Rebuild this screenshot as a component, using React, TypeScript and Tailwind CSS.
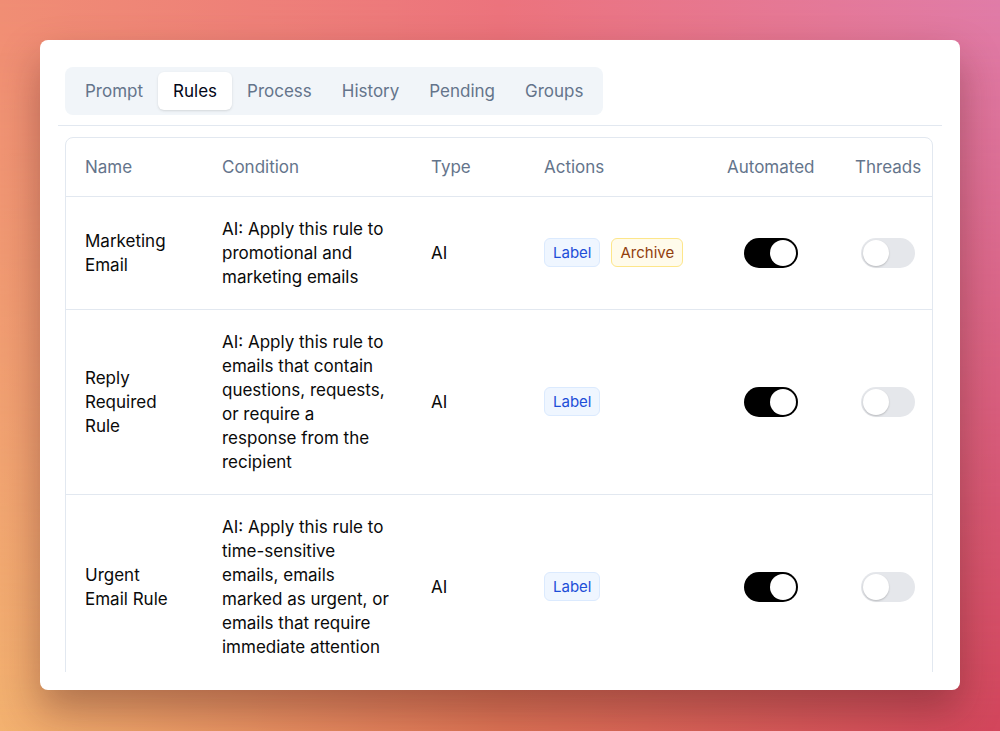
import React from 'react';

type Badge = { text: string; tone: 'blue' | 'amber' };

interface Rule {
  name: string;
  condition: string;
  type: string;
  actions: Badge[];
  automated: boolean;
  threads: boolean;
}

const rules: Rule[] = [
  {
    name: 'Marketing Email',
    condition: 'AI: Apply this rule to promotional and marketing emails',
    type: 'AI',
    actions: [
      { text: 'Label', tone: 'blue' },
      { text: 'Archive', tone: 'amber' },
    ],
    automated: true,
    threads: false,
  },
  {
    name: 'Reply Required Rule',
    condition:
      'AI: Apply this rule to emails that contain questions, requests, or require a response from the recipient',
    type: 'AI',
    actions: [{ text: 'Label', tone: 'blue' }],
    automated: true,
    threads: false,
  },
  {
    name: 'Urgent Email Rule',
    condition:
      'AI: Apply this rule to time-sensitive emails, emails marked as urgent, or emails that require immediate attention',
    type: 'AI',
    actions: [{ text: 'Label', tone: 'blue' }],
    automated: true,
    threads: false,
  },
];

const tabs = ['Prompt', 'Rules', 'Process', 'History', 'Pending', 'Groups'];

const Toggle: React.FC<{ on: boolean }> = ({ on }) =>
  on ? (
    <div className="w-[54px] h-[30px] rounded-full bg-black flex items-center justify-end px-[2px]">
      <div className="w-[26px] h-[26px] rounded-full bg-white" />
    </div>
  ) : (
    <div className="w-[54px] h-[30px] rounded-full bg-[#e5e7eb] flex items-center justify-start px-[2px]">
      <div className="w-[26px] h-[26px] rounded-full bg-white shadow-[0_1px_2px_rgba(0,0,0,0.2)]" />
    </div>
  );

const ActionBadge: React.FC<{ badge: Badge }> = ({ badge }) => (
  <span
    className={
      badge.tone === 'blue'
        ? 'inline-flex items-center h-[29px] px-[8px] rounded-md border border-[#dbeafe] bg-[#eff6ff] text-[#1d4ed8] text-[15px]'
        : 'inline-flex items-center h-[29px] px-[8px] rounded-md border border-[#fde68a] bg-[#fffbeb] text-[#92400e] text-[15px]'
    }
  >
    {badge.text}
  </span>
);

export default function App() {
  return (
    <div className="grid w-full h-[731px] overflow-hidden font-['Inter',sans-serif]">
      <div className="[grid-area:1/1] bg-[linear-gradient(to_right,#f3b270,#dd7355_50%,#d3465c)]" />
      <div className="[grid-area:1/1] bg-[linear-gradient(to_right,#f08d74,#ec737d_50%,#e07ca8)] [mask-image:linear-gradient(to_bottom,black,transparent)]" />
      <div className="[grid-area:1/1] relative z-10 p-10">
        <div className="h-[650px] bg-white rounded-lg shadow-[0_20px_40px_rgba(60,20,20,0.35)] p-[18px] flex flex-col">
          <div className="border-b border-[#e2e8f0] pt-[9px] pb-[10px] px-[7px]">
            <div className="inline-flex bg-[#f1f5f9] rounded-lg p-[5px]">
              {tabs.map((t) =>
                t === 'Rules' ? (
                  <div key={t} className="h-[38px] px-[15px] pt-[1px] flex items-center bg-white rounded-md text-[17px] text-[#020617] shadow-sm">
                    {t}
                  </div>
                ) : (
                  <div key={t} className="h-[38px] px-[15px] pt-[1px] flex items-center text-[17px] text-[#64748b]">
                    {t}
                  </div>
                )
              )}
            </div>
          </div>
          <div className="flex-1 min-h-0 overflow-hidden pt-[11px] pl-[7px] pr-[9px]">
            <div className="border border-[#e2e8f0] rounded-lg">
              <table className="w-full table-fixed border-collapse text-[17px] leading-6">
                <colgroup>
                  <col className="w-[137px]" />
                  <col className="w-[209px]" />
                  <col className="w-[113px]" />
                  <col className="w-[183px]" />
                  <col className="w-[128px]" />
                  <col />
                </colgroup>
                <thead>
                  <tr className="h-[58px] text-[#64748b] text-left">
                    <th className="font-normal pl-[19px]">Name</th>
                    <th className="font-normal pl-[19px]">Condition</th>
                    <th className="font-normal pl-[19px]">Type</th>
                    <th className="font-normal pl-[19px]">Actions</th>
                    <th className="font-normal pl-[19px]">Automated</th>
                    <th className="font-normal pl-[19px]">Threads</th>
                  </tr>
                </thead>
                <tbody className="text-[#0a0a0a]">
                  {rules.map((r) => (
                    <tr key={r.name} className="border-t border-[#e2e8f0]">
                      <td className="pl-[19px] pr-5 py-5">{r.name}</td>
                      <td className="pl-[19px] pr-5 py-5">{r.condition}</td>
                      <td className="pl-[19px] pr-5 py-5">{r.type}</td>
                      <td className="pl-[19px] py-5">
                        <div className="flex gap-[11px]">
                          {r.actions.map((a) => (
                            <ActionBadge key={a.text} badge={a} />
                          ))}
                        </div>
                      </td>
                      <td className="pl-[19px] py-5">
                        <div className="w-[88px] flex justify-center">
                          <Toggle on={r.automated} />
                        </div>
                      </td>
                      <td className="pl-[19px] py-5">
                        <div className="w-[66px] flex justify-center">
                          <Toggle on={r.threads} />
                        </div>
                      </td>
                    </tr>
                  ))}
                </tbody>
              </table>
            </div>
          </div>
        </div>
      </div>
    </div>
  );
}
